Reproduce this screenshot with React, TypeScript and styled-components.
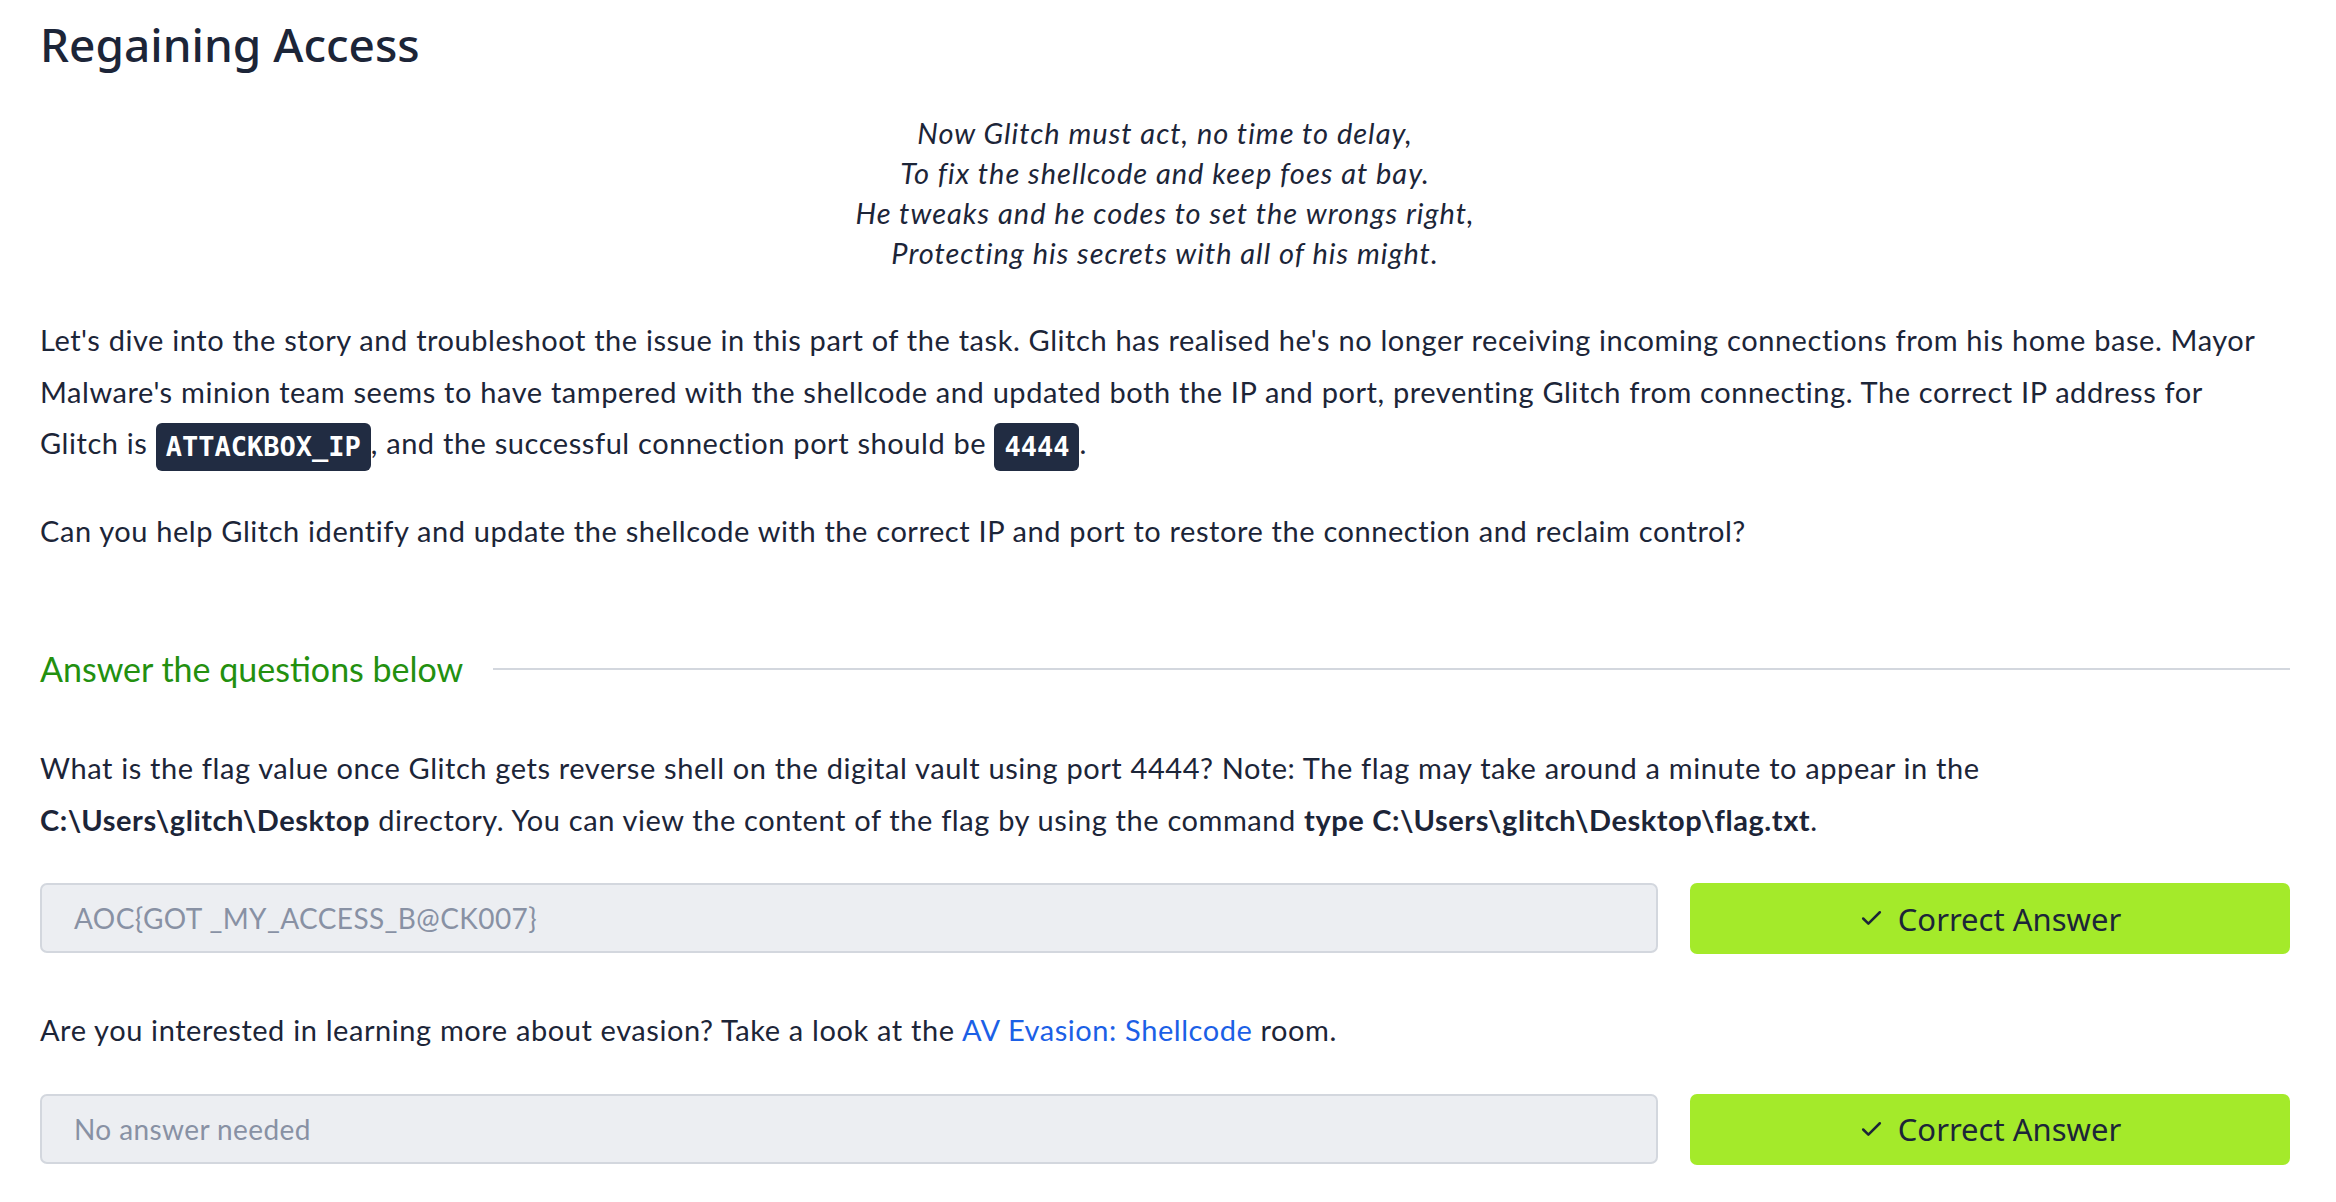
import React from "react";
import styled, { createGlobalStyle } from "styled-components";
import { Check } from "lucide-react";

const GlobalStyle = createGlobalStyle`
  html, body {
    margin: 0;
    padding: 0;
    background: #ffffff;
  }
  body {
    font-family: "Lato", "Liberation Sans", sans-serif;
    color: #1c2538;
  }
`;

const Page = styled.div`
  width: 2250px;
  padding: 18px 46px 40px 40px;
`;

const Title = styled.h2`
  margin: 0;
  font-family: "Noto Sans", "Liberation Sans", sans-serif;
  font-weight: 500;
  font-size: 46px;
  line-height: 53px;
  color: #1c2538;
`;

const Poem = styled.p`
  margin: 42px 0 0;
  text-align: center;
  font-style: italic;
  font-size: 29px;
  letter-spacing: 1px;
  line-height: 40px;
`;

const Para = styled.p<{ $top: number }>`
  max-width: 2236px;
  margin: ${(p) => p.$top}px 0 0;
  font-size: 29px;
  letter-spacing: 0.55px;
  word-spacing: 0.3px;
  line-height: 51.5px;
`;

const Code = styled.code`
  display: inline-block;
  font-family: "DejaVu Sans Mono", "Liberation Mono", monospace;
  font-weight: 700;
  font-size: 27px;
  letter-spacing: 0;
  word-spacing: 0;
  line-height: 48px;
  padding: 0 10px;
  background: #212c42;
  color: #ffffff;
  border-radius: 6px;
  vertical-align: middle;
`;

const Link = styled.a`
  color: #1b60e6;
  text-decoration: none;
`;

const SectionHead = styled.div`
  display: flex;
  align-items: center;
  gap: 30px;
  margin-top: 93px;
`;

const SectionTitle = styled.span`
  font-size: 34px;
  line-height: 40px;
  color: #23900f;
  white-space: nowrap;
`;

const Rule = styled.div`
  flex: 1;
  height: 2px;
  background: #d3d7de;
`;

const AnswerRow = styled.div`
  display: flex;
  gap: 32px;
  margin-top: 38px;
`;

const AnswerInput = styled.div`
  flex: 1;
  height: 70px;
  box-sizing: border-box;
  display: flex;
  align-items: center;
  padding: 0 32px;
  background: #eceef2;
  border: 2px solid #d3d7de;
  border-radius: 7px;
  font-size: 28px;
  letter-spacing: 0.4px;
  color: #8891a4;
`;

const CorrectButton = styled.button`
  width: 600px;
  height: 71px;
  display: flex;
  align-items: center;
  justify-content: center;
  gap: 14px;
  border: none;
  border-radius: 7px;
  background: #a4ea2a;
  color: #1c2538;
  font-family: "Noto Sans", "Liberation Sans", sans-serif;
  font-size: 31px;
  cursor: pointer;
`;

const App: React.FC = () => {
  return (
    <>
      <GlobalStyle />
      <Page>
        <Title>Regaining Access</Title>
        <Poem>
          Now Glitch must act, no time to delay,
          <br />
          To fix the shellcode and keep foes at bay.
          <br />
          He tweaks and he codes to set the wrongs right,
          <br />
          Protecting his secrets with all of his might.
        </Poem>
        <Para $top={41}>
          Let's dive into the story and troubleshoot the issue in this part of the task. Glitch has
          realised he's no longer receiving incoming connections from his home base. Mayor Malware's
          minion team seems to have tampered with the shellcode and updated both the IP and port,
          preventing Glitch from connecting. The correct IP address for Glitch is{" "}
          <Code>ATTACKBOX_IP</Code>, and the successful connection port should be <Code>4444</Code>.
        </Para>
        <Para $top={34}>
          Can you help Glitch identify and update the shellcode with the correct IP and port to
          restore the connection and reclaim control?
        </Para>

        <SectionHead>
          <SectionTitle>Answer the questions below</SectionTitle>
          <Rule />
        </SectionHead>

        <Para $top={53}>
          What is the flag value once Glitch gets reverse shell on the digital vault using port 4444?
          Note: The flag may take around a minute to appear in the{" "}
          <strong>C:\Users\glitch\Desktop</strong> directory. You can view the content of the flag by
          using the command <strong>type C:\Users\glitch\Desktop\flag.txt</strong>.
        </Para>
        <AnswerRow>
          <AnswerInput>AOC{"{"}GOT _MY_ACCESS_B@CK007{"}"}</AnswerInput>
          <CorrectButton>
            <Check size={25} strokeWidth={2.4} />
            Correct Answer
          </CorrectButton>
        </AnswerRow>

        <Para $top={50}>
          Are you interested in learning more about evasion? Take a look at the{" "}
          <Link href="#">AV Evasion: Shellcode</Link> room.
        </Para>
        <AnswerRow>
          <AnswerInput>No answer needed</AnswerInput>
          <CorrectButton>
            <Check size={25} strokeWidth={2.4} />
            Correct Answer
          </CorrectButton>
        </AnswerRow>
      </Page>
    </>
  );
};

export default App;
